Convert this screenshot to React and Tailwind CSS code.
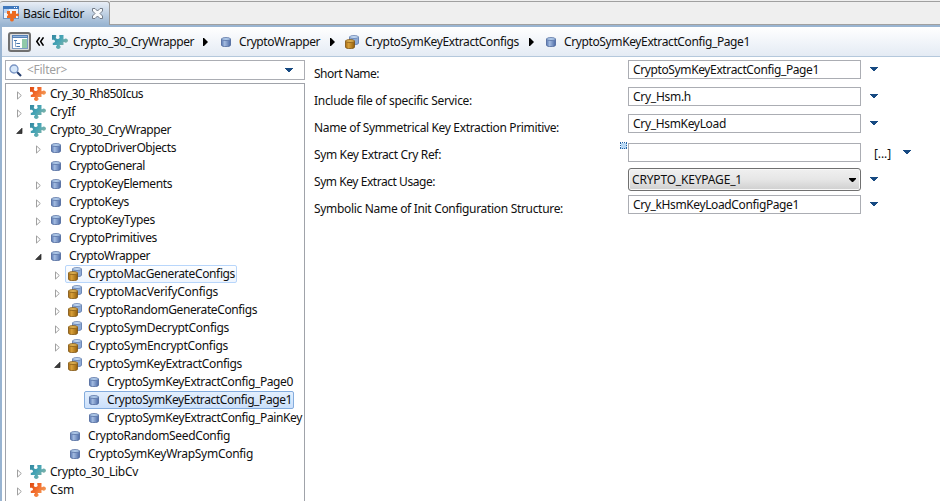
import { useLayoutEffect, useRef, useState } from 'react';

// Single-line label whose tracking is adjusted so that it fills the given width.
function Label({ text, w, className = '' }) {
  const ref = useRef(null);
  const [spacing, setSpacing] = useState(0);
  useLayoutEffect(() => {
    const natural = ref.current.getBoundingClientRect().width;
    setSpacing((w - natural) / text.length);
  }, [text, w]);
  return (
    <span className={`inline-block h-4 shrink-0 leading-4 whitespace-nowrap ${className}`}>
      <span ref={ref} style={{ letterSpacing: spacing }}>{text}</span>
    </span>
  );
}

function Puzzle({ orange }) {
  const id = orange ? 'pzo' : 'pzt';
  return (
    <svg width="16" height="14" viewBox="0 0 16 14" className="shrink-0">
      <defs>
        <linearGradient id={id} x1="0" y1="0" x2="1" y2="0.6">
          <stop offset="0" stopColor={orange ? '#dd4a10' : '#34879f'} />
          <stop offset="0.5" stopColor={orange ? '#f36c2c' : '#46a5b6'} />
          <stop offset="1" stopColor={orange ? '#f2a05c' : '#86b3a6'} />
        </linearGradient>
      </defs>
      <path
        fill={`url(#${id})`}
        d="M0 0h4.200v1.500C3.500 2.200 3.700 4 5.700 4s2.400-1.800 1.600-2.500V0H11.500v4.200h.7c.3-.5.9-.8 1.600-.8 1.200 0 2.200 1 2.200 2.200s-1 2.200-2.200 2.200c-.7 0-1.300-.3-1.600-.8h-.7v3H7.800v.8c.5.300.8.700.8 1.300 0 1-.9 1.900-2.300 1.900S4 13.100 4 12.100c0-.6.300-1 .8-1.300V10H.8V7.700c1.600 0 2.200-.7 2.200-1.500S2 4.700 0 4.900z"
      />
    </svg>
  );
}

function CylinderShape({ x, y, gold }) {
  const edge = gold ? '#7b5010' : '#4a6499';
  const id = gold ? 'cyg' : 'cyb';
  return (
    <g transform={`translate(${x} ${y})`}>
      <defs>
        <linearGradient id={id}>
          <stop offset="0" stopColor={gold ? '#a96d12' : '#5a7ab4'} />
          <stop offset="0.35" stopColor={gold ? '#d8a03a' : '#a3bbe0'} />
          <stop offset="1" stopColor={gold ? '#94600c' : '#4d6ba6'} />
        </linearGradient>
      </defs>
      <path d="M.5 2v6.200c0 1.900 9 1.900 9 0V2z" fill={`url(#${id})`} stroke={edge} strokeWidth=".8" />
      <ellipse cx="5" cy="2" rx="4.500" ry="1.500" fill={gold ? '#dcae50' : '#afc9e9'} stroke={edge} strokeWidth=".7" />
    </g>
  );
}

function Cylinder() {
  return (
    <svg width="10" height="10" viewBox="0 0 10 10" className="shrink-0">
      <CylinderShape x={0} y={0} />
    </svg>
  );
}

function CylinderPair() {
  return (
    <svg width="14" height="14" viewBox="0 0 14 14" className="shrink-0">
      <g transform="translate(4 0)">
        <path d="M.5 2v6.200c0 1.900 9 1.900 9 0V2z" fill="#8eabd6" stroke="#5774a8" strokeWidth=".8" />
        <ellipse cx="5" cy="2" rx="4.500" ry="1.500" fill="#c2d8f2" stroke="#5774a8" strokeWidth=".7" />
      </g>
      <CylinderShape x={0} y={4} gold />
    </svg>
  );
}

function Expander({ state }) {
  return (
    <svg width="7" height="9" viewBox="0 0 7 9" className="mt-[3px] shrink-0">
      {state === 'closed' && <path d="M1.500.9v7.200L5.300 4.500z" fill="#fff" stroke="#a0a0a0" />}
      {state === 'open' && <path d="M6 1.200V6.500H.7z" fill="#3b3b3b" stroke="#202020" strokeWidth=".7" />}
    </svg>
  );
}

function Down({ className = '' }) {
  return (
    <svg width="8" height="4" viewBox="0 0 8 4" className={`shrink-0 ${className}`}>
      <path d="M0 0h8v1H7v1H6v1H5v1H3V3H2V2H1V1H0z" fill="#174a82" />
    </svg>
  );
}

function Crumb() {
  return (
    <svg width="5" height="8" viewBox="0 0 5 8" className="shrink-0">
      <path d="M0 0h1l4 4-4 4H0z" fill="#000" />
    </svg>
  );
}

const rows = [
  [0, 'closed', 'orange', 'Cry_30_Rh850Icus', 93],
  [0, 'closed', 'teal', 'CryIf', 25],
  [0, 'open', 'teal', 'Crypto_30_CryWrapper', 121],
  [1, 'closed', 'cyl', 'CryptoDriverObjects', 107],
  [1, 'none', 'cyl', 'CryptoGeneral', 76],
  [1, 'closed', 'cyl', 'CryptoKeyElements', 103],
  [1, 'closed', 'cyl', 'CryptoKeys', 60],
  [1, 'closed', 'cyl', 'CryptoKeyTypes', 86],
  [1, 'closed', 'cyl', 'CryptoPrimitives', 88],
  [1, 'open', 'cyl', 'CryptoWrapper', 81],
  [2, 'closed', 'pair', 'CryptoMacGenerateConfigs', 147, 'hover'],
  [2, 'closed', 'pair', 'CryptoMacVerifyConfigs', 130],
  [2, 'closed', 'pair', 'CryptoRandomGenerateConfigs', 169],
  [2, 'closed', 'pair', 'CryptoSymDecryptConfigs', 141],
  [2, 'closed', 'pair', 'CryptoSymEncryptConfigs', 140],
  [2, 'open', 'pair', 'CryptoSymKeyExtractConfigs', 154],
  [3, 'none', 'cyl', 'CryptoSymKeyExtractConfig_Page0', 186],
  [3, 'none', 'cyl', 'CryptoSymKeyExtractConfig_Page1', 185, 'selected'],
  [3, 'none', 'cyl', 'CryptoSymKeyExtractConfig_PainKey', 195],
  [2, 'none', 'cyl', 'CryptoRandomSeedConfig', 142],
  [2, 'none', 'cyl', 'CryptoSymKeyWrapSymConfig', 165],
  [0, 'closed', 'teal', 'Crypto_30_LibCv', 88],
  [0, 'closed', 'orange', 'Csm', 24],
];

const indents = ['pl-[10px]', 'pl-[29px]', 'pl-[48px]', 'pl-[67px]'];
const highlights = {
  hover: 'border-[#b8d6fb] bg-linear-to-b from-[#fdfeff] to-[#eef5fe]',
  selected: 'border-[#84acdd] bg-linear-to-b from-[#e3effd] to-[#cbe0fb]',
};

function TreeRow({ row }) {
  const [level, state, icon, text, w, mark] = row;
  return (
    <div className={`flex h-[18px] items-center ${indents[level]}`}>
      <Expander state={state} />
      <div className={`ml-1 flex h-[18px] items-center rounded-[2px] border pr-px ${mark ? highlights[mark] : 'border-transparent'}`}>
        <span className="mr-px flex w-[21px] items-center">
          {icon === 'orange' && <span className="ml-0.5"><Puzzle orange /></span>}
          {icon === 'teal' && <span className="ml-0.5"><Puzzle /></span>}
          {icon === 'cyl' && <span className="ml-1"><Cylinder /></span>}
          {icon === 'pair' && <span className="ml-0.5"><CylinderPair /></span>}
        </span>
        <Label text={text} w={w} />
      </div>
    </div>
  );
}

const labels = [
  ['Short Name:', 65],
  ['Include file of specific Service:', 158],
  ['Name of Symmetrical Key Extraction Primitive:', 245],
  ['Sym Key Extract Cry Ref:', 127],
  ['Sym Key Extract Usage:', 121],
  ['Symbolic Name of Init Configuration Structure:', 249],
];

function Field({ text, w, className = '' }) {
  return (
    <div className={`flex items-start ${className}`}>
      <div className="flex h-[19px] w-[233px] items-center border border-[#abadb3] bg-white pl-[4px]">
        {text && <Label text={text} w={w} />}
      </div>
      <Down className="mt-[7px] ml-[9px]" />
    </div>
  );
}

export default function App() {
  return (
    <div className="flex h-[501px] w-[940px] flex-col overflow-hidden bg-white font-['Noto_Sans','Open_Sans',sans-serif] text-[12px] text-[#101010]">
      <div className="flex h-[25px] shrink-0 border-b border-[#a0a0a0] bg-[#efefef] pt-px">
        <div className="-mb-px flex w-[110px] items-center rounded-t-[3px] border-t border-r border-[#9a9a9a] bg-linear-to-b from-[#e8eef6] to-[#99b4d1] pl-[3px]">
          <svg width="16" height="16" viewBox="0 0 16 16" className="shrink-0">
            <rect x=".5" y=".5" width="15" height="12" fill="#eef4fc" stroke="#6e93c2" />
            <path d="M0 0h16v3H0z" fill="#3f78bd" />
            <path d="M11 1h1v1h-1zM13 1h1v1h-1z" fill="#fff" />
            <path d="M1 3h5v4H1z" fill="#bdd3ef" />
            <path d="M4 5h3v2c0 1 2 1 2 0V5h4v3c1.500-1 3-.5 3 .9s-1.500 1.800-3 .9V12h-2.500c1 1.600.3 3.500-1.500 3.500S6.500 13.700 7.500 12H4V9.800c1.500.3 1.500-2 0-1.700z" fill="#ed6a1f" />
          </svg>
          <Label text="Basic Editor" w={61} className="mt-px ml-1" />
          <svg width="11" height="11" viewBox="0 0 11 11" className="ml-2 shrink-0">
            <path d="M.5.500h2.500L5.500 3 8 .5h2.500V3L8 5.500 10.500 8v2.500H8L5.500 8 3 10.500H.5V8L3 5.500.5 3z" fill="#f8fafc" stroke="#68717d" strokeWidth=".9" />
          </svg>
        </div>
        <div className="flex-1 border-t border-[#a0a0a0]" />
      </div>
      <div className="flex min-h-0 flex-1 flex-col border-t-2 border-l-2 border-[#99b4d1]">
        <div className="flex h-[30px] shrink-0 items-center border-b border-[#b4c8dc] bg-linear-to-b from-white to-[#e4ebf4] pl-[6px]">
          <div className="flex h-5 w-[23px] items-center justify-center rounded-[3px] border-2 border-[#707070] bg-[#dcdcdc]">
            <svg width="16" height="14" viewBox="0 0 16 14">
              <rect x=".5" y=".5" width="15" height="13" fill="#fff" stroke="#7c9cc4" />
              <path d="M0 0h16v3H0z" fill="#5680b5" />
              <path d="M1 1h14v1H1z" fill="#92b4dd" />
              <path d="M2 5h3v1H2zM5 8h3v1H5zM5 11h3v1H5z" fill="#4678ad" />
              <path d="M3.500 6v5.500H5M3.500 8.500H5" fill="none" stroke="#8baacb" />
              <path d="M10 4h5v9h-5z" fill="#91c9a9" />
            </svg>
          </div>
          <svg width="8" height="9" viewBox="0 0 8 9" className="ml-[5px] shrink-0">
            <path d="M3.700.3.8 4.500l2.900 4.200M7.500.3 4.600 4.500l2.900 4.200" fill="none" stroke="#000" strokeWidth="1.500" />
          </svg>
          <span className="mr-[5px] ml-2"><Puzzle /></span>
          <Label text="Crypto_30_CryWrapper" w={121} className="mt-px" />
          <span className="mr-[13px] ml-[9px]"><Crumb /></span>
          <Cylinder />
          <Label text="CryptoWrapper" w={81} className="mt-px ml-2" />
          <span className="mr-[10px] ml-[10px]"><Crumb /></span>
          <CylinderPair />
          <Label text="CryptoSymKeyExtractConfigs" w={154} className="mt-px ml-[6px]" />
          <span className="mr-3 ml-[10px]"><Crumb /></span>
          <Cylinder />
          <Label text="CryptoSymKeyExtractConfig_Page1" w={186} className="mt-px ml-2" />
        </div>
        <div className="flex min-h-0 flex-1">
          <div className="ml-[3px] flex w-[300px] flex-col pt-[3px]">
            <div className="flex h-5 shrink-0 items-center border border-[#abadb3] pl-[3px]">
              <svg width="13" height="13" viewBox="0 0 13 13">
                <path d="m8 8 4 4" stroke="#263f70" strokeWidth="2.200" />
                <circle cx="5" cy="5" r="4" fill="#d6e7fa" stroke="#7a95c4" strokeWidth="1.300" />
              </svg>
              <Label text="<Filter>" w={40} className="ml-[5px] text-[#a0a0a0]" />
              <Down className="mr-[11px] mb-px ml-auto" />
            </div>
            <div className="mt-[3px] flex min-h-0 flex-1 flex-col overflow-hidden border border-b-0 border-[#a0a3aa] pt-px pr-px">
              {rows.map((row) => <TreeRow key={row[3]} row={row} />)}
            </div>
          </div>
          <div className="ml-[9px] flex w-[306px] flex-col pt-[3px]">
            {labels.map(([text, w]) => (
              <div key={text} className="flex h-[27px] items-center"><Label text={text} w={w} /></div>
            ))}
          </div>
          <div className="flex flex-col pt-[3px]">
            <div className="ml-2 flex flex-col gap-2">
              <Field text="CryptoSymKeyExtractConfig_Page1" w={186} />
              <Field text="Cry_Hsm.h" w={58} />
              <Field text="Cry_HsmKeyLoad" w={93} />
            </div>
            <div className="mt-[9px] flex h-5 items-start">
              <svg width="8" height="8" viewBox="0 0 8 8" className="shrink-0">
                <rect x="1" y="1" width="6" height="6" fill="#b9d9f5" />
                <path d="M0 .5h8M0 6.500h8M.5 1v6M6.500 1v6" fill="none" stroke="#2764a5" strokeDasharray="1 1" />
              </svg>
              <div className="mt-px h-[19px] w-[233px] border border-[#abadb3]" />
              <Label text="[...]" w={17} className="mt-1 ml-[13px]" />
              <Down className="mt-2 ml-3" />
            </div>
            <div className="mt-[6px] ml-2 flex items-start">
              <div className="flex h-[23px] w-[233px] items-center rounded-[3px] border border-[#707070] bg-linear-to-b from-[#f0f0f0] via-[#e6e6e6] via-50% to-[#cfcfcf] pl-[3px] shadow-[inset_0_0_0_1px_#f8f8f8]">
                <Label text="CRYPTO_KEYPAGE_1" w={110} />
                <svg width="7" height="4" viewBox="0 0 7 4" className="mr-1 ml-auto">
                  <path d="M0 0h7v1L4 4H3L0 1z" fill="#000" />
                </svg>
              </div>
              <Down className="mt-[9px] ml-[9px]" />
            </div>
            <Field text="Cry_kHsmKeyLoadConfigPage1" w={166} className="mt-1 ml-2" />
          </div>
        </div>
      </div>
    </div>
  );
}
